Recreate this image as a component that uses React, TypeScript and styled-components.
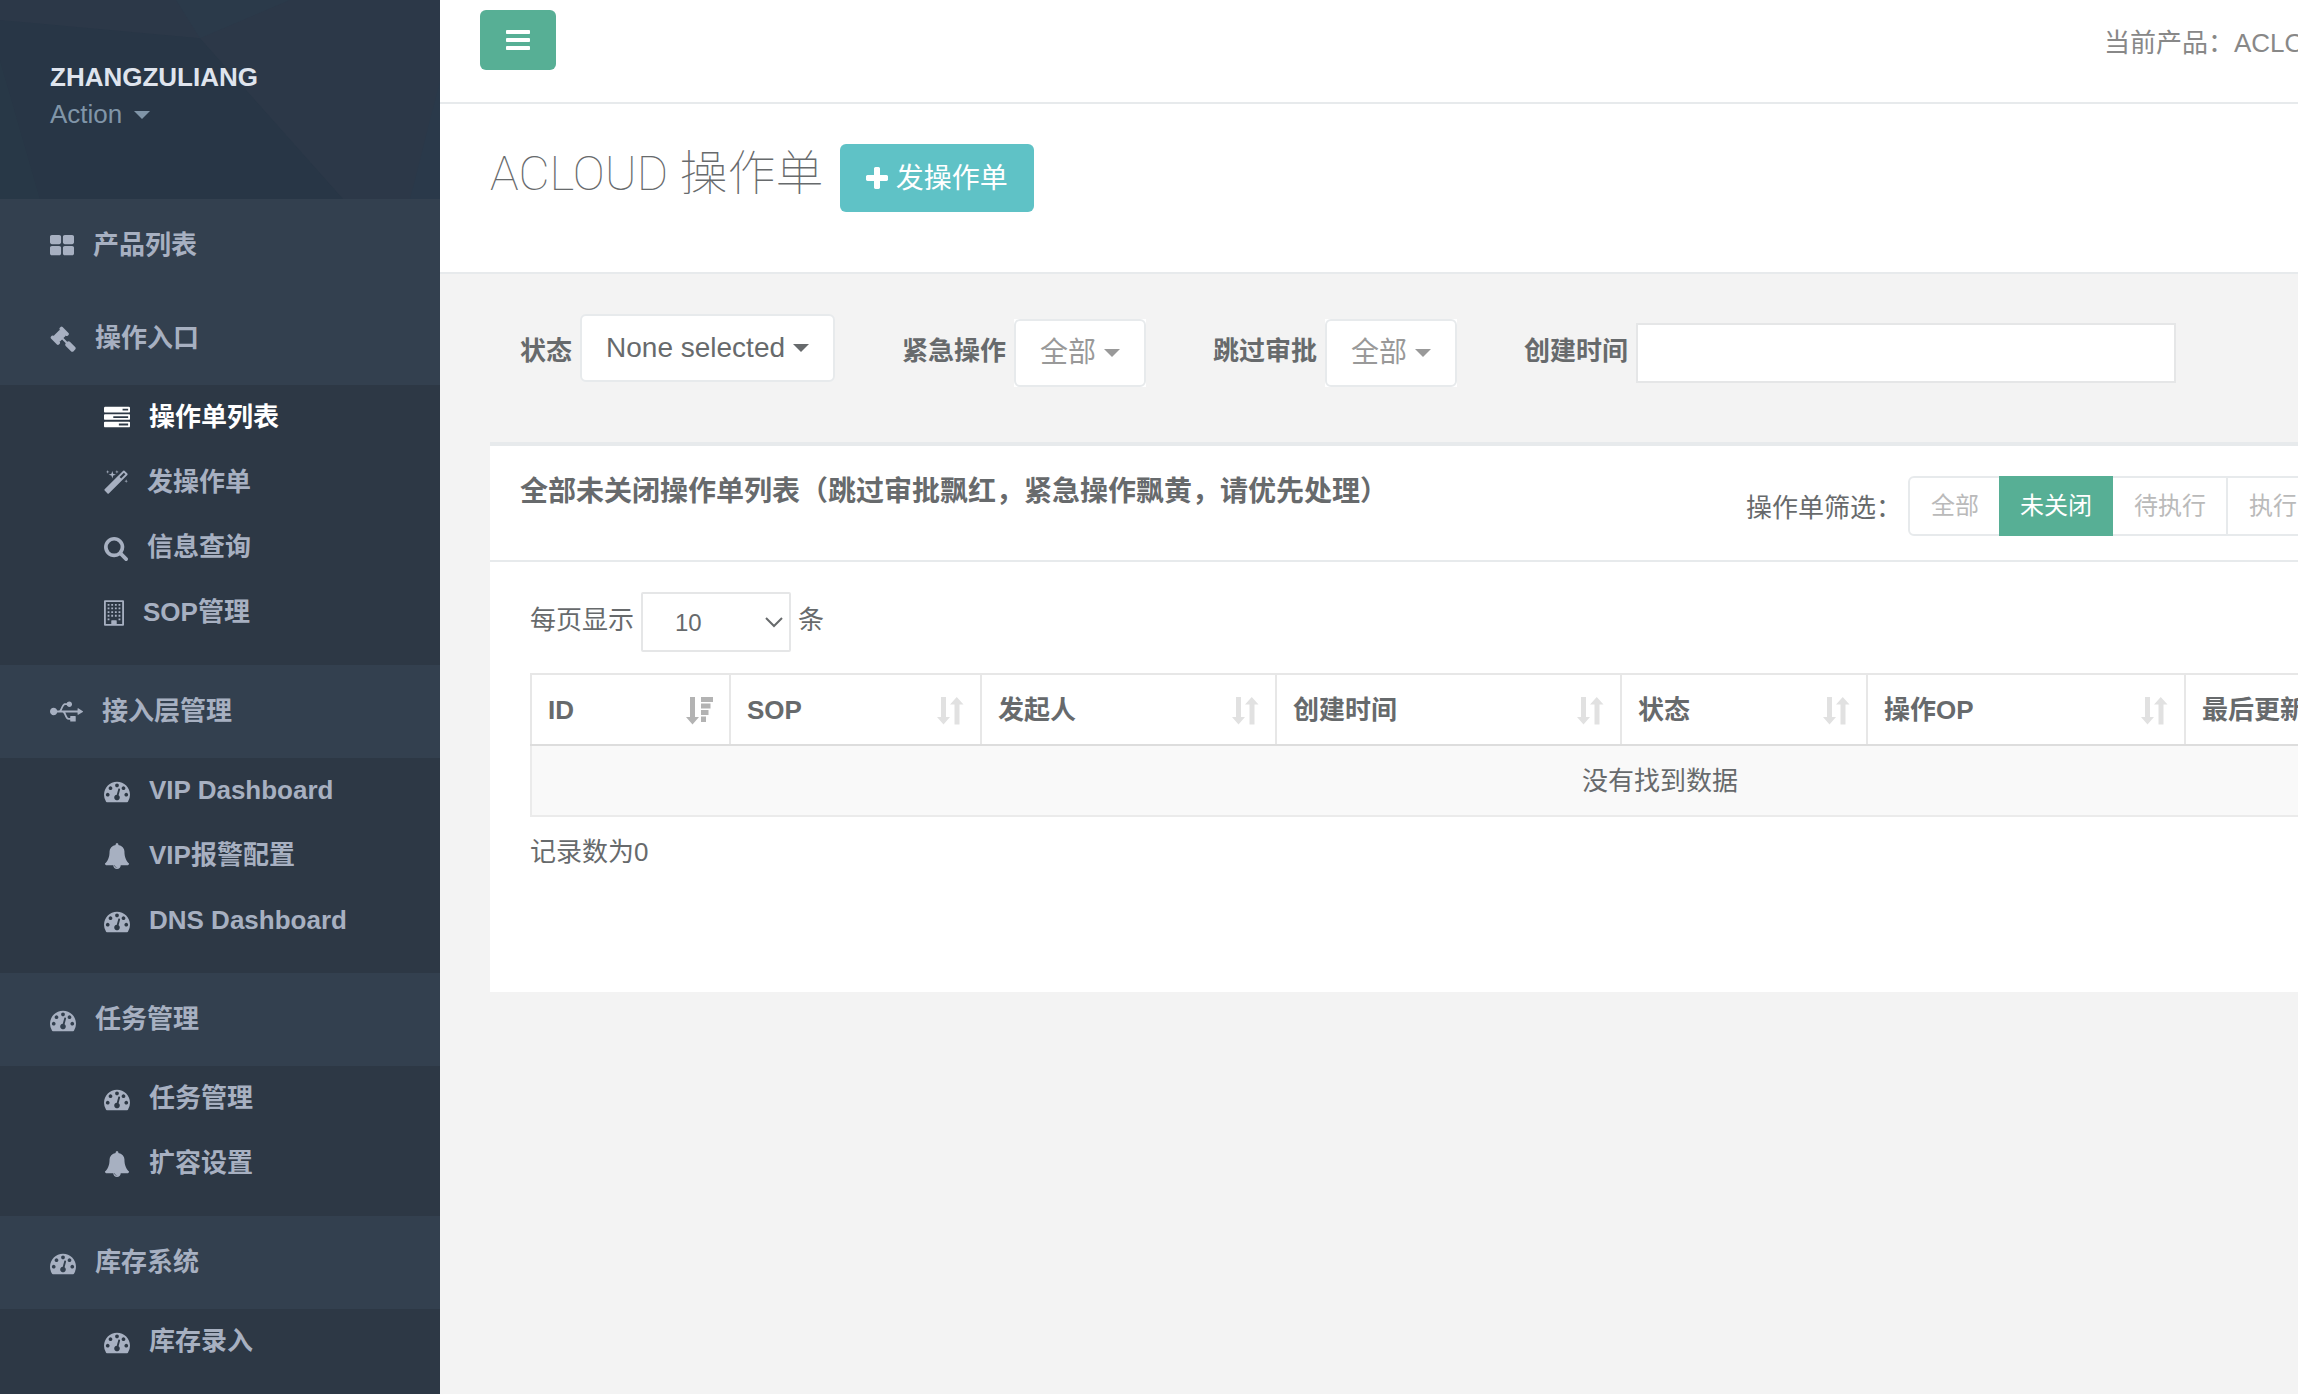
import React from "react";
import styled, { createGlobalStyle } from "styled-components";
import { FaUsb } from "react-icons/fa";

const color = {
  text: "#676a6c",
  nav: "#a7b0c1",
  line: "#e7eaec",
  control: "#e5e6e7",
  green: "#57af95",
  teal: "#5fc2c6",
};

const GlobalStyle = createGlobalStyle`
  *, *::before, *::after { box-sizing: border-box; }
  body {
    margin: 0;
    background: #f3f3f3;
    color: ${color.text};
    font-family: "Liberation Sans", "Noto Sans CJK SC", sans-serif;
    font-size: 26px;
    line-height: 37px;
  }
  button, input, select { font-family: inherit; color: inherit; margin: 0; }
  h2, h5, p { margin: 0; }
`;

/* ---------- icons ---------- */

type GlyphName =
  | "thLarge" | "gavel" | "tasks" | "magic" | "search" | "building"
  | "dashboard" | "bell" | "bars" | "plus";

const windows: string = [256, 512, 768, 1024, 1280]
  .flatMap((y) =>
    [512, 768, 1024, 1280]
      .filter((x) => !(y === 1280 && (x === 768 || x === 1024)))
      .map((x) => `M${x - 64} ${y}h128v128h-128z`)
  )
  .join("");

const glyphs: Record<GlyphName, { x: number; w: number; d: string }> = {
  thLarge: {
    x: 64, w: 1664,
    d: "M832 1024v384q0 52-38 90t-90 38h-512q-52 0-90-38t-38-90v-384q0-52 38-90t90-38h512q52 0 90 38t38 90zm0-768v384q0 52-38 90t-90 38h-512q-52 0-90-38t-38-90v-384q0-52 38-90t90-38h512q52 0 90 38t38 90zm896 768v384q0 52-38 90t-90 38h-512q-52 0-90-38t-38-90v-384q0-52 38-90t90-38h512q52 0 90 38t38 90zm0-768v384q0 52-38 90t-90 38h-512q-52 0-90-38t-38-90v-384q0-52 38-90t90-38h512q52 0 90 38t38 90z",
  },
  gavel: {
    x: 0, w: 1792,
    d: "M1771 1536q0 53-37 90l-107 108q-39 37-91 37-53 0-90-37l-363-364q-38-36-38-90 0-53 43-96l-256-256-126 126q-14 14-34 14t-34-14q2 2 12.5 12t12.5 13 10 11.5 10 13.5 6 13.5 5.5 16.5 1.5 18q0 38-28 68-3 3-16.5 18t-19 20.5-18.5 16.5-22 15.5-22 9-26 4.5q-40 0-68-28l-408-408q-28-28-28-68 0-13 4.5-26t9-22 15.5-22 16.5-18.5 20.5-19 18-16.5q30-28 68-28 10 0 18 1.5t16.5 5.5 13.5 6 13.5 10 11.5 10 13 12.5 12 12.5q-14-14-14-34t14-34l348-348q14-14 34-14t34 14q-2-2-12.5-12t-12.5-13-10-11.5-10-13.5-6-13.5-5.5-16.5-1.5-18q0-38 28-68 3-3 16.5-18t19-20.5 18.5-16.5 22-15.5 22-9 26-4.5q40 0 68 28l408 408q28 28 28 68 0 13-4.5 26t-9 22-15.5 22-16.5 18.5-20.5 19-18 16.5q-30 28-68 28-10 0-18-1.5t-16.5-5.5-13.5-6-13.5-10-11.5-10-13-12.5-12-12.5q14 14 14 34t-14 34l-126 126 256 256q43-43 96-43 52 0 91 37l363 363q37 39 37 91z",
  },
  tasks: {
    x: 0, w: 1792,
    d: "M1024 1408h640v-128h-640v128zm-384-512h1024v-128h-1024v128zm640-512h384v-128h-384v128zm512 832v256q0 26-19 45t-45 19h-1664q-26 0-45-19t-19-45v-256q0-26 19-45t45-19h1664q26 0 45 19t19 45zm0-512v256q0 26-19 45t-45 19h-1664q-26 0-45-19t-19-45v-256q0-26 19-45t45-19h1664q26 0 45 19t19 45zm0-512v256q0 26-19 45t-45 19h-1664q-26 0-45-19t-19-45v-256q0-26 19-45t45-19h1664q26 0 45 19t19 45z",
  },
  magic: {
    x: 64, w: 1664,
    d: "M1254 581l293-293-107-107-293 293zm447-293q0 27-18 45l-1286 1286q-18 18-45 18t-45-18l-198-198q-18-18-18-45t18-45l1286-1286q18-18 45-18t45 18l198 198q18 18 18 45zm-1351-190l98 30-98 30-30 98-30-98-98-30 98-30 30-98zm350 162l196 60-196 60-60 196-60-196-196-60 196-60 60-196zm930 478l98 30-98 30-30 98-30-98-98-30 98-30 30-98zm-640-640l98 30-98 30-30 98-30-98-98-30 98-30 30-98z",
  },
  search: {
    x: 64, w: 1664,
    d: "M1216 832q0-185-131.5-316.5t-316.5-131.5-316.5 131.5-131.5 316.5 131.5 316.5 316.5 131.5 316.5-131.5 131.5-316.5zm512 832q0 52-38 90t-90 38q-54 0-90-38l-343-342q-179 124-399 124-143 0-273.5-55.5t-225-150-150-225-55.5-273.5 55.5-273.5 150-225 225-150 273.5-55.5 273.5 55.5 225 150 150 225 55.5 273.5q0 220-124 399l343 343q37 37 37 90z",
  },
  building: {
    x: 192, w: 1408,
    d: `M256 0h1280q64 0 64 64v1664q0 64-64 64h-1280q-64 0-64-64v-1664q0-64 64-64zM320 128v1536h384v-224q0-32 32-32h320q32 0 32 32v224h384v-1536z${windows}`,
  },
  dashboard: {
    x: 0, w: 1792,
    d: "M384 1152q0-53-37.5-90.5t-90.5-37.5-90.5 37.5-37.5 90.5 37.5 90.5 90.5 37.5 90.5-37.5 37.5-90.5zm192-448q0-53-37.5-90.5t-90.5-37.5-90.5 37.5-37.5 90.5 37.5 90.5 90.5 37.5 90.5-37.5 37.5-90.5zm428 481l101-382q6-26-7.5-48.5t-38.5-29.5-48 6.5-30 39.5l-101 382q-60 5-107 43.5t-63 98.5q-20 77 20 146t117 89 146-20 89-117q16-60-6-117t-72-91zm660-33q0-53-37.5-90.5t-90.5-37.5-90.5 37.5-37.5 90.5 37.5 90.5 90.5 37.5 90.5-37.5 37.5-90.5zm-640-640q0-53-37.5-90.5t-90.5-37.5-90.5 37.5-37.5 90.5 37.5 90.5 90.5 37.5 90.5-37.5 37.5-90.5zm448 192q0-53-37.5-90.5t-90.5-37.5-90.5 37.5-37.5 90.5 37.5 90.5 90.5 37.5 90.5-37.5 37.5-90.5zm320 448q0 261-141 483-19 29-54 29h-1402q-35 0-54-29-141-221-141-483 0-182 71-348t191-286 286-191 348-71 348 71 286 191 191 286 71 348z",
  },
  bell: {
    x: 0, w: 1792,
    d: "M912 1696q0-16-16-16-59 0-101.5-42.5t-42.5-101.5q0-16-16-16t-16 16q0 73 51.5 124.5t124.5 51.5q16 0 16-16zm816-288q0 52-38 90t-90 38h-448q0 106-75 181t-181 75-181-75-75-181h-448q-52 0-90-38t-38-90q50-42 91-88t85-119.5 74.5-158.5 50-206 19.5-260q0-152 117-282.5t307-158.5q-8-19-8-39 0-40 28-68t68-28 68 28 28 68q0 20-8 39 190 28 307 158.5t117 282.5q0 139 19.5 260t50 206 74.5 158.5 85 119.5 91 88z",
  },
  bars: {
    x: 128, w: 1536,
    d: "M1664 1344v128q0 26-19 45t-45 19h-1408q-26 0-45-19t-19-45v-128q0-26 19-45t45-19h1408q26 0 45 19t19 45zm0-512v128q0 26-19 45t-45 19h-1408q-26 0-45-19t-19-45v-128q0-26 19-45t45-19h1408q26 0 45 19t19 45zm0-512v128q0 26-19 45t-45 19h-1408q-26 0-45-19t-19-45v-128q0-26 19-45t45-19h1408q26 0 45 19t19 45z",
  },
  plus: {
    x: 192, w: 1408,
    d: "M1600 736v192q0 40-28 68t-68 28h-416v416q0 40-28 68t-68 28h-192q-40 0-68-28t-28-68v-416h-416q-40 0-68-28t-28-68v-192q0-40 28-68t68-28h416v-416q0-40 28-68t68-28h192q40 0 68 28t28 68v416h416q40 0 68 28t28 68z",
  },
};

const Svg = styled.svg`
  display: block;
  flex: none;
  fill: currentColor;
`;

function Glyph({ name, size = 26 }: { name: GlyphName; size?: number }) {
  const g = glyphs[name];
  return (
    <Svg
      width={Math.round((g.w * size) / 1792)}
      height={size}
      viewBox={`${g.x} 0 ${g.w} 1792`}
      fillRule={name === "building" ? "evenodd" : "nonzero"}
      aria-hidden="true"
    >
      <path d={g.d} />
    </Svg>
  );
}

const Caret = styled.span`
  border-top: 8px solid currentColor;
  border-left: 8px solid transparent;
  border-right: 8px solid transparent;
`;

function SortIcon({ active }: { active?: boolean }) {
  return (
    <SortSvg $active={active} width="27" height="28" viewBox="0 0 27 28" aria-hidden="true">
      <path d="M4 0h5v20h4l-6.500 7.500-6.500-7.500h4z" />
      {active ? (
        <path d="M15 0h12v5h-12zM15 6.500h9.500v5h-9.500zM15 13h7.500v5h-7.500zM15 19.500h5v5.500h-5z" />
      ) : (
        <path d="M17.500 27.500v-20h-4.500l6.750-7.500 6.750 7.500h-4v20z" />
      )}
    </SortSvg>
  );
}

/* ---------- sidebar ---------- */

const Shell = styled.div`
  display: flex;
  min-height: 100vh;
  overflow: hidden;
`;

const Sidebar = styled.nav`
  flex: none;
  width: 440px;
  height: 100vh;
  overflow: hidden;
  background: #33404f;
  color: ${color.nav};
`;

const Profile = styled.header`
  position: relative;
  height: 199px;
  padding: 59px 50px;
  background: #2c3848;
`;

const Facets = styled.svg`
  position: absolute;
  inset: 0;
  width: 100%;
  height: 100%;
`;

const ProfileName = styled.strong`
  position: relative;
  display: block;
  color: #dfe4ed;
`;

const ProfileMenu = styled.button`
  position: relative;
  display: flex;
  align-items: center;
  gap: 12px;
  padding: 0;
  border: 0;
  background: none;
  color: #8095a8;
  font-size: 26px;
  line-height: 37px;
`;

const NavList = styled.ul`
  margin: 0;
  padding: 0;
  list-style: none;
  font-weight: 700;
`;

const NavLink = styled.a`
  display: flex;
  align-items: center;
  gap: 19px;
  padding: 28px 50px;
  color: inherit;
  text-decoration: none;
`;

const SubList = styled(NavList)`
  padding-bottom: 20px;
  background: #2d3845;
`;

const SubLink = styled(NavLink)<{ $active?: boolean }>`
  padding: 14px 20px 14px 104px;
  color: ${(p) => (p.$active ? "#fff" : "inherit")};
`;

type Icon = GlyphName | "usb";
type Entry = { icon: Icon; label: string; active?: boolean };
type Group = Entry & { items?: Entry[] };

const groups: Group[] = [
  { icon: "thLarge", label: "产品列表" },
  {
    icon: "gavel",
    label: "操作入口",
    items: [
      { icon: "tasks", label: "操作单列表", active: true },
      { icon: "magic", label: "发操作单" },
      { icon: "search", label: "信息查询" },
      { icon: "building", label: "SOP管理" },
    ],
  },
  {
    icon: "usb",
    label: "接入层管理",
    items: [
      { icon: "dashboard", label: "VIP Dashboard" },
      { icon: "bell", label: "VIP报警配置" },
      { icon: "dashboard", label: "DNS Dashboard" },
    ],
  },
  {
    icon: "dashboard",
    label: "任务管理",
    items: [
      { icon: "dashboard", label: "任务管理" },
      { icon: "bell", label: "扩容设置" },
    ],
  },
  {
    icon: "dashboard",
    label: "库存系统",
    items: [{ icon: "dashboard", label: "库存录入" }],
  },
];

function NavIcon({ name }: { name: Icon }) {
  return name === "usb" ? <FaUsb size={33} aria-hidden="true" /> : <Glyph name={name} />;
}

function SideNav() {
  return (
    <Sidebar aria-label="主导航">
      <Profile>
        <Facets viewBox="0 0 440 198" preserveAspectRatio="none" aria-hidden="true">
          <path fill="#283646" d="M0 20L200 38L343 198H0z" />
          <path fill="#283847" d="M0 60L40 198H0z" />
          <path fill="#2b3a4a" d="M176 0H290L200 38z" />
          <path fill="#2a394a" d="M440 80V198H410z" />
        </Facets>
        <ProfileName>ZHANGZULIANG</ProfileName>
        <ProfileMenu type="button">
          Action <Caret />
        </ProfileMenu>
      </Profile>
      <NavList>
        {groups.map((g) => (
          <li key={g.label}>
            <NavLink href="#">
              <NavIcon name={g.icon} />
              {g.label}
            </NavLink>
            {g.items && (
              <SubList>
                {g.items.map((item) => (
                  <li key={item.label}>
                    <SubLink href="#" $active={item.active}>
                      <NavIcon name={item.icon} />
                      {item.label}
                    </SubLink>
                  </li>
                ))}
              </SubList>
            )}
          </li>
        ))}
      </NavList>
    </Sidebar>
  );
}

/* ---------- main area ---------- */

const Main = styled.main`
  flex: 1 0 2440px;
  min-width: 0;
`;

const TopBar = styled.div`
  display: flex;
  justify-content: space-between;
  height: 104px;
  padding: 10px 0 0 40px;
  border-bottom: 2px solid ${color.line};
  background: #fff;
`;

const MenuToggle = styled.button`
  display: flex;
  align-items: center;
  justify-content: center;
  width: 76px;
  height: 60px;
  border: 0;
  border-radius: 6px;
  background: ${color.green};
  color: #fff;
`;

const Product = styled.p`
  width: 776px;
  padding-top: 15px;
  color: #888;
`;

const Heading = styled.header`
  display: flex;
  align-items: flex-start;
  gap: 16px;
  height: 170px;
  padding: 40px 50px 0;
  border-bottom: 2px solid ${color.line};
  background: #fff;
`;

const Title = styled.h2`
  font-family: Roboto, "Noto Sans CJK SC", sans-serif;
  font-size: 48px;
  font-weight: 100;
  line-height: 60px;
`;

const CreateButton = styled.button`
  display: flex;
  align-items: center;
  gap: 8px;
  padding: 15px 26px 13px;
  border: 0;
  border-radius: 6px;
  background: ${color.teal};
  color: #fff;
  font-size: 28px;
  line-height: 40px;
`;

const Filters = styled.form`
  display: flex;
  gap: 67px;
  padding: 40px 80px 55px;
`;

const Field = styled.div`
  display: flex;
  align-items: center;
  gap: 8px;
  height: 73px;
`;

const FieldLabel = styled.label`
  padding-top: 2px;
  font-weight: 700;
`;

const Backing = styled.span`
  align-self: flex-end;
  background: #fff;
`;

const DropButton = styled.button<{ $muted?: boolean }>`
  display: flex;
  align-items: center;
  align-self: flex-start;
  gap: 8px;
  padding: 12px 24px;
  border: 2px solid ${color.line};
  border-radius: 6px;
  background: #fff;
  color: ${(p) => (p.$muted ? "#999" : color.text)};
  font-size: 28px;
  line-height: 40px;
`;

const DateInput = styled.input`
  && { margin-top: 4px; }
  width: 540px;
  height: 60px;
  padding: 12px 24px;
  border: 2px solid ${color.control};
  border-radius: 0;
  background: #fff;
  font-size: 28px;
`;

const Panel = styled.section`
  margin: 0 50px;
  border-top: 4px solid ${color.line};
  background: #fff;
`;

const PanelHead = styled.header`
  display: grid;
  grid-template-columns: 1fr 1054px;
  height: 116px;
  padding: 30px 30px 0;
  border-bottom: 2px solid ${color.line};
`;

const PanelTitle = styled.h5`
  font-size: 28px;
  font-weight: 700;
  line-height: 32px;
`;

const StateFilter = styled.div`
  display: flex;
  align-items: center;
  gap: 6px;
  height: 60px;
`;

const StateCaption = styled.span`
  padding-top: 4px;
`;

const StateButtons = styled.div`
  display: flex;
  border: 2px solid ${color.line};
  border-radius: 6px;
`;

const StateButton = styled.button<{ $active?: boolean }>`
  && { margin: ${(p) => (p.$active ? "-2px 0 -2px -2px" : "0")}; }
  padding: ${(p) => (p.$active ? "12px 21px" : "10px 20px 10px 21px")};
  border: 0;
  border-right: ${(p) => (p.$active ? "0" : `2px solid ${color.line}`)};
  background: ${(p) => (p.$active ? color.green : "transparent")};
  color: ${(p) => (p.$active ? "#fff" : "#bababa")};
  font-size: 24px;
  line-height: 36px;
`;

const PanelBody = styled.div`
  padding: 30px 40px 121px;
`;

const PageLength = styled.div`
  display: flex;
  align-items: center;
  gap: 7px;
  margin-bottom: 21px;
`;

const LengthText = styled.label`
  padding-bottom: 3px;
`;

const SelectBox = styled.span`
  position: relative;
  display: block;
`;

const LengthSelect = styled.select`
  display: block;
  appearance: none;
  width: 150px;
  height: 60px;
  padding: 0 32px;
  border: 2px solid ${color.control};
  border-radius: 2px;
  background: #fff;
  font-size: 24px;
`;

const Chevron = styled.svg`
  position: absolute;
  top: 25px;
  right: 8px;
  pointer-events: none;
`;

const Table = styled.table`
  width: 100%;
  border: 2px solid #ebebeb;
  border-collapse: collapse;
  table-layout: fixed;
`;

const Th = styled.th`
  padding: 17px 16px 15px;
  border: 2px solid #e7e7e7;
  border-bottom-color: #ddd;
  text-align: left;
`;

const ThInner = styled.div`
  display: flex;
  align-items: center;
  justify-content: space-between;
  white-space: nowrap;
`;

const SortSvg = styled(Svg)<{ $active?: boolean }>`
  color: ${(p) => (p.$active ? "#b3b3b3" : "#e1e1e1")};
`;

const Empty = styled.td`
  padding: 17px 16px 15px;
  background: #f9f9f9;
  text-align: center;
`;

const Info = styled.p`
  padding-top: 17px;
`;

const columns: { label: string; width?: number }[] = [
  { label: "ID", width: 199 },
  { label: "SOP", width: 251 },
  { label: "发起人", width: 295 },
  { label: "创建时间", width: 345 },
  { label: "状态", width: 246 },
  { label: "操作OP", width: 318 },
  { label: "最后更新时间" },
];

const states = ["全部", "未关闭", "待执行", "执行中"];

export default function App() {
  return (
    <>
      <GlobalStyle />
      <Shell>
        <SideNav />
        <Main>
          <TopBar>
            <MenuToggle type="button" aria-label="菜单">
              <Glyph name="bars" size={28} />
            </MenuToggle>
            <Product>当前产品：ACLOUD</Product>
          </TopBar>
          <Heading>
            <Title>ACLOUD 操作单</Title>
            <CreateButton type="button">
              <Glyph name="plus" size={28} />
              发操作单
            </CreateButton>
          </Heading>
          <Filters>
            <Field>
              <FieldLabel htmlFor="state">状态</FieldLabel>
              <DropButton type="button" id="state">
                None selected <Caret />
              </DropButton>
            </Field>
            <Field>
              <FieldLabel htmlFor="urgent">紧急操作</FieldLabel>
              <Backing>
                <DropButton type="button" id="urgent" $muted>
                  全部 <Caret />
                </DropButton>
              </Backing>
            </Field>
            <Field>
              <FieldLabel htmlFor="skip">跳过审批</FieldLabel>
              <Backing>
                <DropButton type="button" id="skip" $muted>
                  全部 <Caret />
                </DropButton>
              </Backing>
            </Field>
            <Field>
              <FieldLabel htmlFor="created">创建时间</FieldLabel>
              <DateInput id="created" type="text" />
            </Field>
          </Filters>
          <Panel>
            <PanelHead>
              <PanelTitle>全部未关闭操作单列表（跳过审批飘红，紧急操作飘黄，请优先处理）</PanelTitle>
              <StateFilter>
                <StateCaption>操作单筛选：</StateCaption>
                <StateButtons>
                  {states.map((s) => (
                    <StateButton key={s} type="button" $active={s === "未关闭"}>
                      {s}
                    </StateButton>
                  ))}
                </StateButtons>
              </StateFilter>
            </PanelHead>
            <PanelBody>
              <PageLength>
                <LengthText htmlFor="length">每页显示</LengthText>
                <SelectBox>
                  <LengthSelect id="length" defaultValue="10">
                    <option>10</option>
                    <option>25</option>
                    <option>50</option>
                  </LengthSelect>
                  <Chevron width="18" height="12" viewBox="0 0 18 12" aria-hidden="true">
                    <path d="M1 1l8 8 8-8" fill="none" stroke="#676a6c" strokeWidth="2" />
                  </Chevron>
                </SelectBox>
                <LengthText htmlFor="length">条</LengthText>
              </PageLength>
              <Table>
                <colgroup>
                  {columns.map((c) => (
                    <col key={c.label} width={c.width} />
                  ))}
                </colgroup>
                <thead>
                  <tr>
                    {columns.map((c, i) => (
                      <Th key={c.label} scope="col">
                        <ThInner>
                          {c.label}
                          <SortIcon active={i === 0} />
                        </ThInner>
                      </Th>
                    ))}
                  </tr>
                </thead>
                <tbody>
                  <tr>
                    <Empty colSpan={columns.length}>没有找到数据</Empty>
                  </tr>
                </tbody>
              </Table>
              <Info role="status">记录数为0</Info>
            </PanelBody>
          </Panel>
        </Main>
      </Shell>
    </>
  );
}
